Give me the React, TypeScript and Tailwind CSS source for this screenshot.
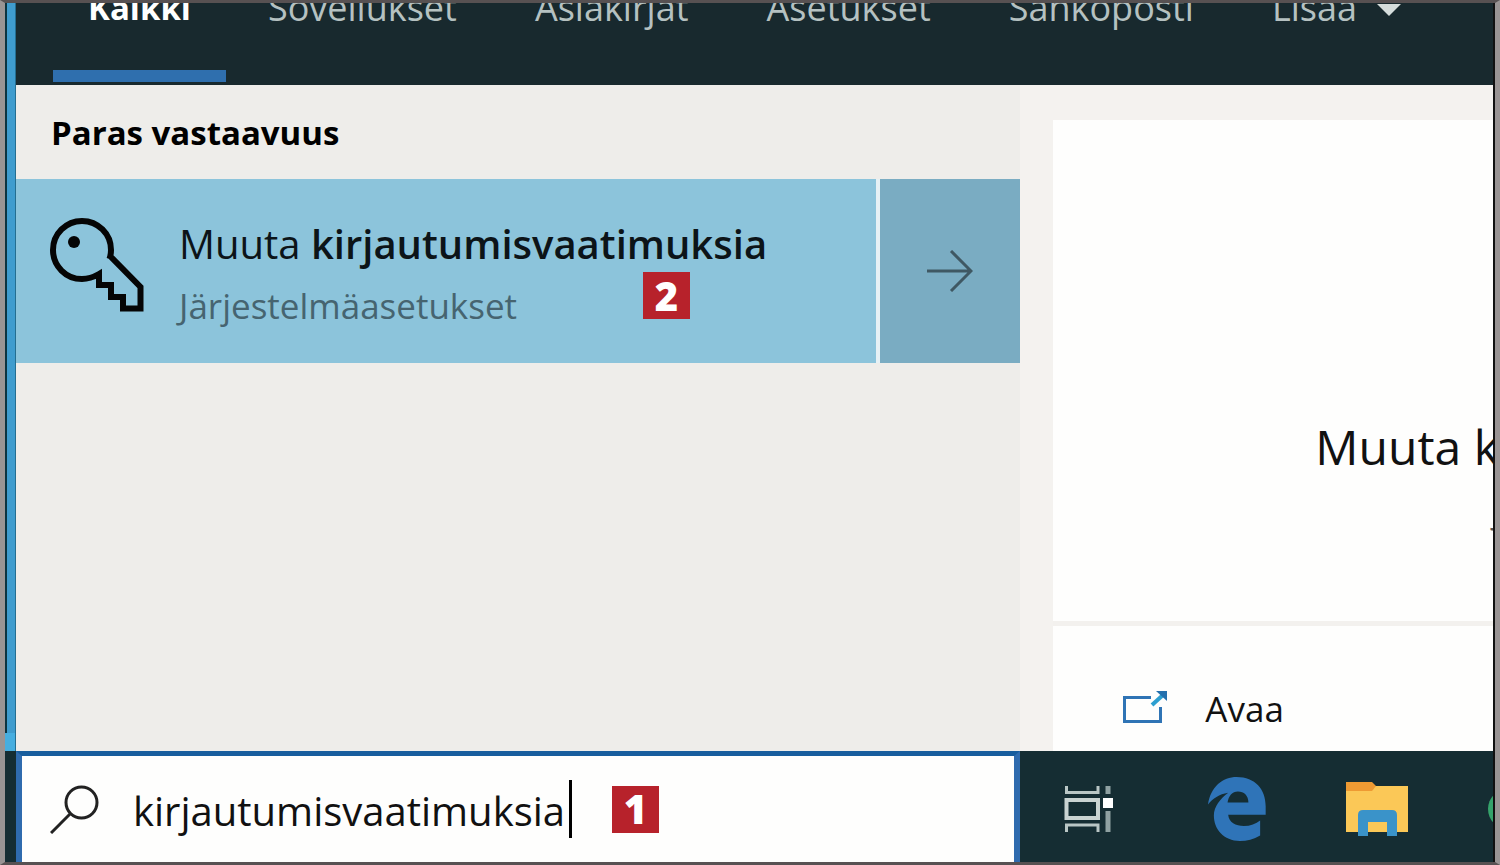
import { useState } from 'react';

const tabs = ['Sovellukset', 'Asiakirjat', 'Asetukset', 'Sähköposti'];

const KeyIcon = () => (
    <svg viewBox="0 0 94 94" className="mb-3 h-[94px] w-[94px] flex-shrink-0" fill="none" stroke="#050505" strokeWidth="6" aria-hidden="true">
        <path d="M60 38 L90.500 69 V90.500 H73 V79 H61 V67 H49 V56 C42 60 36 61 32 61 A29 29 0 1 1 61 32 C61 36 60.500 38 59.500 41" />
        <circle cx="24" cy="24" r="6" fill="#050505" stroke="none" />
    </svg>
);

const ArrowIcon = () => (
    <svg viewBox="0 0 46 42" className="h-[42px] w-[46px]" fill="none" stroke="#3f5863" strokeWidth="3" aria-hidden="true">
        <path d="M0 21 H44 M24 1 L44 21 L24 41" />
    </svg>
);

const SearchIcon = () => (
    <svg viewBox="0 0 50 50" className="h-[50px] w-[50px] flex-shrink-0" fill="none" stroke="#222" strokeWidth="3" aria-hidden="true">
        <circle cx="31.500" cy="18.500" r="15.500" />
        <path d="M20.500 29.500 L1 49" />
    </svg>
);

const OpenIcon = () => (
    <svg viewBox="0 0 46 34" className="mb-1 h-[34px] w-[46px]" fill="none" aria-hidden="true">
        <path d="M29 7.500 H2.500 V31.500 H38.500 V17" stroke="#2f74b5" strokeWidth="3" />
        <path d="M30 15 L41 5" stroke="#2d9fd0" strokeWidth="4" />
        <path d="M34 1 H45 V11 Z" fill="#2470ae" />
    </svg>
);

const TaskViewIcon = () => (
    <svg viewBox="0 0 64 48" className="h-12 w-16" fill="none" aria-hidden="true">
        <path d="M2.500 1 V7.500 H34 V1 M2.500 47 V40 H34 V47" stroke="#b9c6c5" strokeWidth="3" />
        <rect x="2.500" y="15" width="31.500" height="18" stroke="#c9d3d2" strokeWidth="4" />
        <path d="M44 1 V9 M44 26 V47" stroke="#8fa1a2" strokeWidth="5" />
        <rect x="39" y="13" width="10" height="10" fill="#fff" />
    </svg>
);

const EdgeIcon = () => (
    <svg viewBox="0 0 178 196" className="h-[64px] w-[58px]" aria-hidden="true">
        <path
            fill="#2f74b8"
            fillRule="evenodd"
            d="M0 84 C8 30 45 0 88 0 C145 0 177 38 177 90 V116 H62 C64 140 85 150 110 150 C130 150 147 143 160 133 V179 C140 191 120 196 98 196 C48 196 18 160 18 118 C18 90 38 66 62 48 C34 52 15 66 0 84 Z M60 78 H124 C124 56 110 44 92 44 C74 44 63 58 60 78 Z"
        />
    </svg>
);

const FolderIcon = () => (
    <svg viewBox="0 0 62 54" className="h-[54px] w-[62px]" aria-hidden="true">
        <path d="M0 4 H62 V50 H0 Z" fill="#fbc857" />
        <path d="M0 0 H26 L30 4 L26 9 H0 Z" fill="#ee9a33" />
        <path d="M12 54 V33 Q12 28 17 28 H46 Q51 28 51 33 V54 H41 V40 H22 V54 Z" fill="#3a93c9" />
    </svg>
);

const Step = ({ number }: { number: number }) => (
    <span className="flex h-[47px] w-[47px] flex-shrink-0 items-center justify-center bg-[#b7222b] text-[40px] leading-none font-extrabold text-white">
        {number}
    </span>
);

const App = () => {
    const [query, setQuery] = useState('kirjautumisvaatimuksia');

    return (
        <div className="flex min-h-screen flex-col overflow-hidden border-x-[5px] border-y-[3px] border-x-[#999494] border-y-[#575152] bg-[#152d33] font-['Open_Sans',sans-serif]">
            <div className="flex flex-1 border-r-2 border-[#111]">
                {/* Vasen reuna */}
                <div className="flex w-[11px] flex-shrink-0 flex-col">
                    <div className="flex-1 border-r border-l-2 border-r-[#246e91] border-l-[#0b3340] bg-[#3f9cce]" />
                    <div className="h-[18px] border-r border-[#246e91] bg-[#46aee0]" />
                </div>

                <main className="flex min-w-0 flex-1 flex-col">
                    {/* Välilehdet */}
                    <nav className="flex h-[82px] items-end gap-[6px] overflow-hidden bg-[#18292e] pl-[37px] text-[36px] leading-[48px] whitespace-nowrap text-[#b5c1c1]">
                        <button className="mb-[3px] border-b-[12px] border-[#2f6fae] px-[35px] pb-[38px] text-[33px] font-bold text-white">Kaikki</button>
                        {tabs.map((tab) => (
                            <button key={tab} className="px-9 pb-[53px]">
                                {tab}
                            </button>
                        ))}
                        <button className="flex items-center gap-5 px-9 pb-[53px]">
                            Lisää
                            <svg viewBox="0 0 24 12" className="mt-1 h-3 w-6" aria-hidden="true">
                                <path d="M0 0 H24 L12 12 Z" fill="#d5dddc" />
                            </svg>
                        </button>
                    </nav>

                    <div className="flex flex-1">
                        {/* Hakutulokset */}
                        <section className="w-[68%] flex-shrink-0 bg-[#eeedea]">
                            <h2 className="px-[35px] pt-6 pb-[22px] text-[33px] leading-[48px] font-bold text-black">Paras vastaavuus</h2>
                            <div className="flex h-[184px] gap-1 bg-[#e6f1f5]">
                                <button className="relative flex flex-1 items-center gap-[35px] bg-[#8cc4db] pl-[34px] text-left">
                                    <KeyIcon />
                                    <span className="flex flex-col pt-2">
                                        <span className="text-[40px] leading-[62px] text-[#0c1418]">
                                            Muuta <b className="font-semibold">kirjautumisvaatimuksia</b>
                                        </span>
                                        <span className="text-[35px] leading-[62px] text-[#466470]">Järjestelmäasetukset</span>
                                    </span>
                                    <span className="absolute top-[93px] left-[627px]">
                                        <Step number={2} />
                                    </span>
                                </button>
                                <button className="flex w-[140px] items-center justify-center bg-[#7aacc2]" aria-label="Näytä tiedot">
                                    <ArrowIcon />
                                </button>
                            </div>
                        </section>

                        {/* Esikatselu */}
                        <section className="flex min-w-0 flex-1 bg-[#f4f2ef] pt-[35px] pl-[33px]">
                            <div className="flex min-w-0 flex-1 flex-col overflow-hidden bg-[#fefefd] whitespace-nowrap">
                                <div className="flex flex-1 flex-col justify-end gap-2 border-b-[5px] border-[#f3f1ee] pb-[86px]">
                                    <h3 className="pl-[262px] text-[48px] leading-[64px] text-[#111]">Muuta kirjautumisvaatimuksia</h3>
                                    <p className="pl-[440px] text-[35px] leading-[48px] text-[#555]">Järjestelmäasetukset</p>
                                </div>
                                <button className="flex h-[125px] items-center gap-[37px] pt-10 pl-[69px] text-[35px] leading-[48px] text-[#111]">
                                    <OpenIcon />
                                    Avaa
                                </button>
                            </div>
                        </section>
                    </div>
                </main>
            </div>

            {/* Tehtäväpalkki */}
            <footer className="flex h-[111px] border-r-2 border-[#111] pl-[11px]">
                <label className="flex w-[68%] flex-shrink-0 items-center border-x-[6px] border-t-[5px] border-x-[#2f6bae] border-t-[#175d9d] bg-[#fefefd] pl-7">
                    <SearchIcon />
                    <input
                        type="text"
                        aria-label="Haku"
                        className="ml-[33px] field-sizing-content pt-1 text-[40px] leading-[56px] text-[#111] outline-none"
                        value={query}
                        onChange={(e) => setQuery(e.target.value)}
                    />
                    <span className="mr-10 ml-1 h-[58px] w-[3px] bg-black" />
                    <Step number={1} />
                </label>
                <div className="flex min-w-0 flex-1 items-center gap-20 overflow-hidden pt-1 pl-11">
                    <button className="flex-shrink-0" aria-label="Tehtävänäkymä"><TaskViewIcon /></button>
                    <button className="flex-shrink-0" aria-label="Edge"><EdgeIcon /></button>
                    <button className="flex-shrink-0" aria-label="Resurssienhallinta"><FolderIcon /></button>
                    <button className="h-10 w-10 flex-shrink-0 rounded-full bg-[#35a36b]" aria-label="Sovellus" />
                </div>
            </footer>
        </div>
    );
};

export default App;
